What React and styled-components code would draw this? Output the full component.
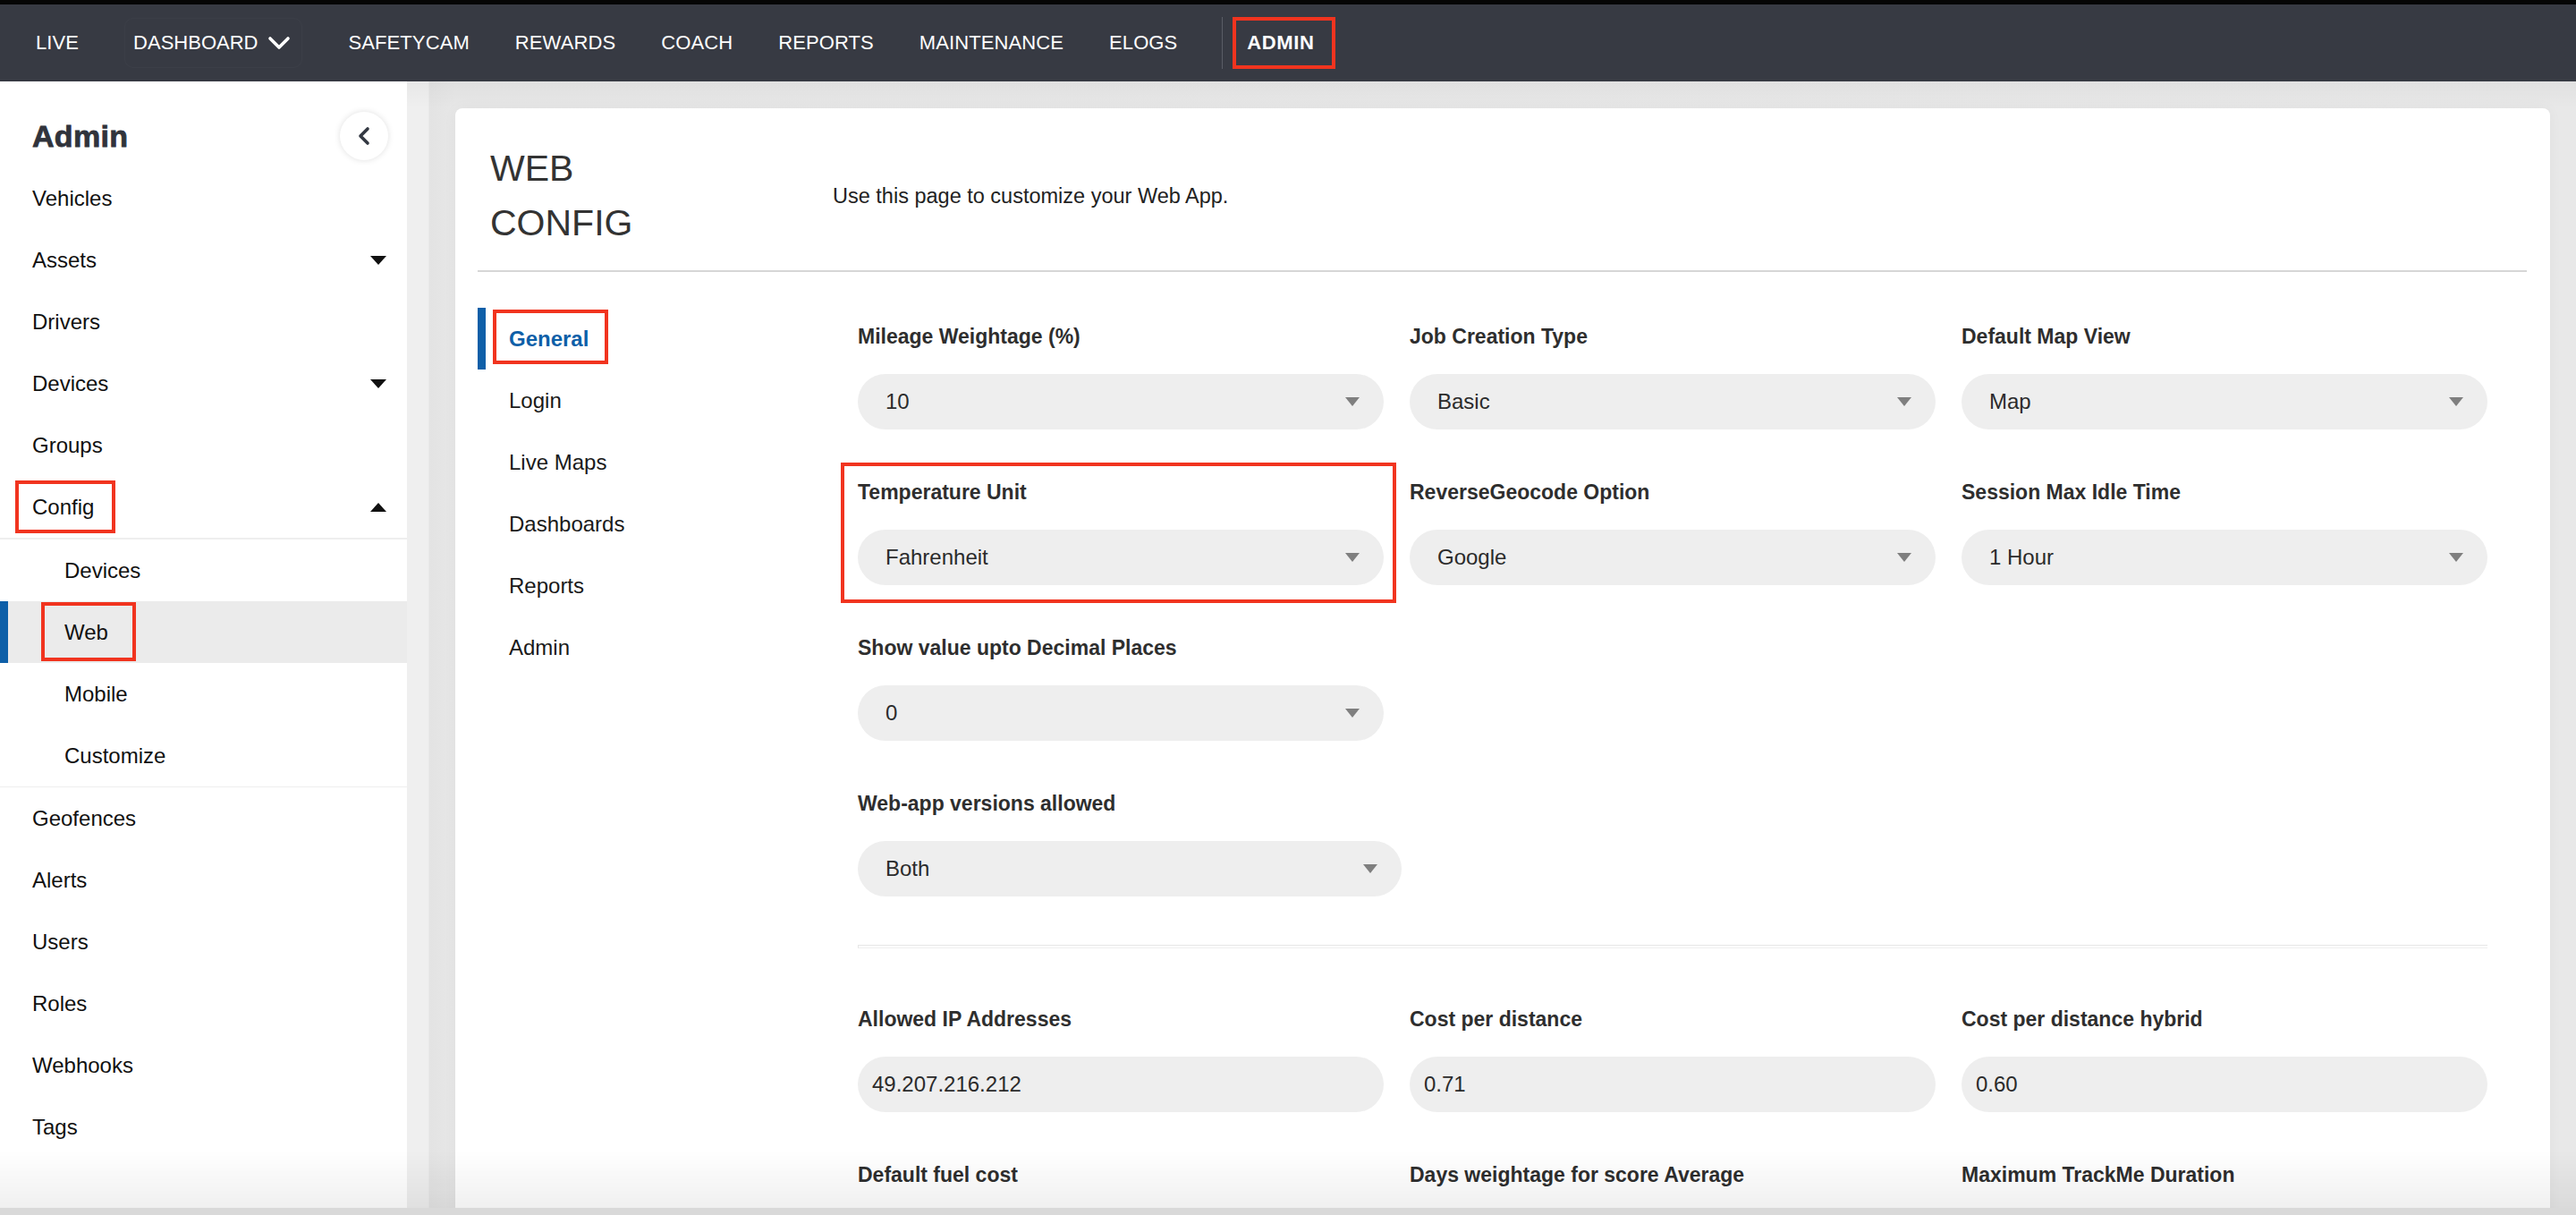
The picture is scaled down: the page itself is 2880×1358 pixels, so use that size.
import React from "react";
import styled, { createGlobalStyle, css } from "styled-components";

const GlobalStyle = createGlobalStyle`
  html, body {
    margin: 0;
    padding: 0;
    height: 100%;
    overflow: hidden;
    background: #e8e8e8;
  }
  * {
    box-sizing: border-box;
  }
  body {
    font-family: "Liberation Sans", Arial, sans-serif;
    color: #222;
  }
`;

const RED = "#f1341f";
const BLUE = "#0e5fa8";

const Page = styled.div`
  display: flex;
  flex-direction: column;
  height: 100vh;
  overflow: hidden;
`;

const TopStrip = styled.div`
  height: 5px;
  background: #050505;
  flex-shrink: 0;
`;

const NavBar = styled.nav`
  height: 86px;
  flex-shrink: 0;
  background: #373a43;
  display: flex;
  align-items: center;
  gap: 51px;
  padding-left: 40px;
`;

const NavItem = styled.div`
  color: #fff;
  font-size: 22px;
  font-weight: ${({ $bold }) => ($bold ? 700 : 400)};
  letter-spacing: ${({ $bold }) => ($bold ? "0.6px" : "0.1px")};
  white-space: nowrap;
`;

const NavDrop = styled.div`
  display: flex;
  align-items: center;
  gap: 11px;
  height: 56px;
  padding: 0 12px 0 9px;
  border: 1px solid rgba(255, 255, 255, 0.025);
  border-radius: 10px;
  color: #fff;
  font-size: 22px;
`;

const NavAdminGroup = styled.div`
  display: flex;
  align-items: center;
  gap: 27px;
  margin-left: -1px;
`;

const NavSep = styled.div`
  width: 1px;
  height: 58px;
  background: #5a5d66;
`;

const Marked = styled.span`
  position: relative;
  display: inline-block;

  &::after {
    content: "";
    position: absolute;
    top: ${({ $t }) => -$t}px;
    right: ${({ $r }) => -$r}px;
    bottom: ${({ $b }) => -$b}px;
    left: ${({ $l }) => -$l}px;
    border: 4px solid ${RED};
    pointer-events: none;
  }
`;

const Body = styled.div`
  flex: 1;
  min-height: 0;
  display: flex;
`;

const Sidebar = styled.aside`
  width: 455px;
  flex-shrink: 0;
  background: #fff;
  overflow: hidden;
`;

const SidebarHeader = styled.div`
  height: 96px;
  padding: 26px 21px 0 36px;
  display: flex;
  align-items: center;
  justify-content: space-between;
`;

const SidebarTitle = styled.h2`
  margin: 0;
  font-size: 34px;
  font-weight: 700;
  color: #30333b;
  -webkit-text-stroke: 0.8px #30333b;
  letter-spacing: 0.3px;
`;

const CollapseButton = styled.button`
  width: 54px;
  height: 54px;
  border-radius: 50%;
  border: none;
  background: #fff;
  box-shadow: 0 0 7px rgba(0, 0, 0, 0.13);
  display: flex;
  align-items: center;
  justify-content: center;
  padding: 0;
`;

const SideRow = styled.div`
  height: 69px;
  display: flex;
  align-items: center;
  justify-content: space-between;
  padding: 0 23px 0 ${({ $sub }) => ($sub ? 72 : 36)}px;
  font-size: 24px;
  color: #111;
  ${({ $active }) =>
    $active &&
    css`
      background: #ebebeb;
      box-shadow: inset 9px 0 0 ${BLUE};
    `}
`;

const SubGroup = styled.div`
  border-top: 2px solid #eeeeee;
  border-bottom: 1px solid #eeeeee;
`;

const Caret = styled.span`
  width: 0;
  height: 0;
  border-left: 9.5px solid transparent;
  border-right: 9.5px solid transparent;
  ${({ $up }) =>
    $up
      ? css`
          border-bottom: 10px solid #111;
        `
      : css`
          border-top: 10px solid #111;
        `}
`;

const Main = styled.main`
  flex: 1;
  min-width: 0;
  padding: 30px 29px 0 54px;
  background:
    linear-gradient(180deg, rgba(0, 0, 0, 0.03) 0, rgba(0, 0, 0, 0) 30px),
    linear-gradient(90deg, #efefef 0, #efefef 24px, #e3e3e3 25px, #e7e7e7 54px, #e8e8e8 100%);
  overflow: hidden;
`;

const Card = styled.section`
  background: #fff;
  border-radius: 8px;
  padding: 0 26px 0 25px;
  min-height: 1400px;
  box-shadow: 0 0 16px rgba(0, 0, 0, 0.04);
`;

const CardHeader = styled.header`
  display: flex;
  align-items: center;
  padding: 37px 0 22px;
  border-bottom: 2px solid #d6d6d6;
`;

const PageTitle = styled.h1`
  width: 397px;
  margin: 0;
  padding-left: 14px;
  font-size: 41px;
  line-height: 61px;
  font-weight: 400;
  color: #333;
`;

const Subtitle = styled.p`
  margin: 0;
  font-size: 23.5px;
  color: #222;
`;

const CardBody = styled.div`
  display: flex;
`;

const Tabs = styled.ul`
  list-style: none;
  margin: 0;
  padding: 40px 0 0;
  width: 425px;
  flex-shrink: 0;
`;

const Tab = styled.li`
  height: 69px;
  display: flex;
  align-items: center;
  padding-left: 35px;
  font-size: 24px;
  color: #1a1a1a;
  ${({ $active }) =>
    $active &&
    css`
      border-left: 9px solid ${BLUE};
      padding-left: 26px;
      color: ${BLUE};
      font-weight: 700;
    `}
`;

const FormGrid = styled.div`
  display: grid;
  grid-template-columns: repeat(3, 588px);
  column-gap: 29px;
  row-gap: 56px;
  padding-top: 58px;
  align-content: start;
`;

const Field = styled.div`
  display: flex;
  flex-direction: column;
  gap: 28px;
  position: relative;
  ${({ $newRow }) =>
    $newRow &&
    css`
      grid-column: 1;
    `}
  ${({ $marked }) =>
    $marked &&
    css`
      &::after {
        content: "";
        position: absolute;
        top: -19px;
        right: -14px;
        bottom: -20px;
        left: -19px;
        border: 4px solid ${RED};
        pointer-events: none;
      }
    `}
`;

const Label = styled.label`
  font-size: 23px;
  line-height: 28px;
  font-weight: 700;
  color: #2e2e2e;
  white-space: nowrap;
`;

const Control = styled.div`
  height: 62px;
  width: ${({ $wide }) => ($wide ? "608px" : "100%")};
  border-radius: 31px;
  background: #eeeeee;
  display: flex;
  align-items: center;
  justify-content: space-between;
  padding: 0 27px 0 ${({ $input }) => ($input ? 16 : 31)}px;
  font-size: 24px;
  color: #2b2b2b;
`;

const Arrow = styled.span`
  width: 0;
  height: 0;
  border-left: 8.5px solid transparent;
  border-right: 8.5px solid transparent;
  border-top: 10px solid #7f7f7f;
`;

const Rule = styled.div`
  grid-column: 1 / -1;
  height: 4px;
  margin: -2px 0 9px;
  border-top: 1px solid #e6e6e6;
  border-bottom: 1px solid #efefef;
  border-left: 1px solid #e6e6e6;
`;

const BottomFade = styled.div`
  position: fixed;
  left: 0;
  right: 0;
  bottom: 8px;
  height: 64px;
  background: linear-gradient(180deg, rgba(0, 0, 0, 0) 0, rgba(0, 0, 0, 0.06) 100%);
  pointer-events: none;
`;

const BottomEdge = styled.div`
  position: fixed;
  left: 0;
  right: 0;
  bottom: 0;
  height: 8px;
  background: #d9d9d9;
`;

const navItems = ["SAFETYCAM", "REWARDS", "COACH", "REPORTS", "MAINTENANCE", "ELOGS"];

const sideTop = [
  { name: "Vehicles" },
  { name: "Assets", caret: true },
  { name: "Drivers" },
  { name: "Devices", caret: true },
  { name: "Groups" },
];

const sideBottom = ["Geofences", "Alerts", "Users", "Roles", "Webhooks", "Tags"];

const tabs = ["General", "Login", "Live Maps", "Dashboards", "Reports", "Admin"];

const fieldsTop = [
  { label: "Mileage Weightage (%)", value: "10" },
  { label: "Job Creation Type", value: "Basic" },
  { label: "Default Map View", value: "Map" },
  { label: "Temperature Unit", value: "Fahrenheit", marked: true },
  { label: "ReverseGeocode Option", value: "Google" },
  { label: "Session Max Idle Time", value: "1 Hour" },
  { label: "Show value upto Decimal Places", value: "0", newRow: true },
  { label: "Web-app versions allowed", value: "Both", newRow: true, wide: true },
];

// last row sits under the fold, its values are not visible
const fieldsBottom = [
  { label: "Allowed IP Addresses", value: "49.207.216.212" },
  { label: "Cost per distance", value: "0.71" },
  { label: "Cost per distance hybrid", value: "0.60" },
  { label: "Default fuel cost", value: "" },
  { label: "Days weightage for score Average", value: "" },
  { label: "Maximum TrackMe Duration", value: "" },
];

const ChevronDown = () => (
  <svg width="26" height="16" viewBox="0 0 26 16">
    <polyline points="3,3 13,13 23,3" fill="none" stroke="#fff" strokeWidth="3.6" strokeLinecap="round" strokeLinejoin="round" />
  </svg>
);

const ChevronLeft = () => (
  <svg width="16" height="24" viewBox="0 0 16 24">
    <polyline points="12,4 4,12 12,20" fill="none" stroke="#333842" strokeWidth="3.6" strokeLinecap="round" strokeLinejoin="round" />
  </svg>
);

const App = () => {
  return (
    <Page>
      <GlobalStyle />
      <TopStrip />
      <NavBar>
        <NavItem>LIVE</NavItem>
        <NavDrop>
          DASHBOARD
          <ChevronDown />
        </NavDrop>
        {navItems.map((item) => (
          <NavItem key={item}>{item}</NavItem>
        ))}
        <NavAdminGroup>
          <NavSep />
          <Marked $t={16} $r={24} $b={16} $l={16}>
            <NavItem $bold>ADMIN</NavItem>
          </Marked>
        </NavAdminGroup>
      </NavBar>

      <Body>
        <Sidebar>
          <SidebarHeader>
            <SidebarTitle>Admin</SidebarTitle>
            <CollapseButton aria-label="Collapse">
              <ChevronLeft />
            </CollapseButton>
          </SidebarHeader>
          {sideTop.map((item) => (
            <SideRow key={item.name}>
              {item.name}
              {item.caret && <Caret />}
            </SideRow>
          ))}
          <SideRow>
            <Marked $t={16} $r={24} $b={15} $l={19}>Config</Marked>
            <Caret $up />
          </SideRow>
          <SubGroup>
            <SideRow $sub>Devices</SideRow>
            <SideRow $sub $active>
              <Marked $t={20} $r={31} $b={18} $l={26}>Web</Marked>
            </SideRow>
            <SideRow $sub>Mobile</SideRow>
            <SideRow $sub>Customize</SideRow>
          </SubGroup>
          {sideBottom.map((name) => (
            <SideRow key={name}>{name}</SideRow>
          ))}
        </Sidebar>

        <Main>
          <Card>
            <CardHeader>
              <PageTitle>
                WEB
                <br />
                CONFIG
              </PageTitle>
              <Subtitle>Use this page to customize your Web App.</Subtitle>
            </CardHeader>
            <CardBody>
              <Tabs>
                {tabs.map((tab, i) => (
                  <Tab key={tab} $active={i === 0}>
                    {i === 0 ? (
                      <Marked $t={19} $r={22} $b={14} $l={18}>{tab}</Marked>
                    ) : (
                      tab
                    )}
                  </Tab>
                ))}
              </Tabs>
              <FormGrid>
                {fieldsTop.map((f) => (
                  <Field key={f.label} $newRow={f.newRow} $marked={f.marked}>
                    <Label>{f.label}</Label>
                    <Control $wide={f.wide}>
                      {f.value}
                      <Arrow />
                    </Control>
                  </Field>
                ))}
                <Rule />
                {fieldsBottom.map((f) => (
                  <Field key={f.label}>
                    <Label>{f.label}</Label>
                    <Control $input>{f.value}</Control>
                  </Field>
                ))}
              </FormGrid>
            </CardBody>
          </Card>
        </Main>
      </Body>
      <BottomFade />
      <BottomEdge />
    </Page>
  );
};

export default App;
